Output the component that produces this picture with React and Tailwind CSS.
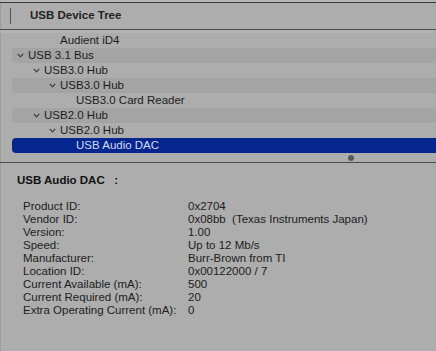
const tree = [
  { label: "Audient iD4", level: 2, leaf: true },
  { label: "USB 3.1 Bus", level: 0 },
  { label: "USB3.0 Hub", level: 1 },
  { label: "USB3.0 Hub", level: 2 },
  { label: "USB3.0 Card Reader", level: 3, leaf: true },
  { label: "USB2.0 Hub", level: 1 },
  { label: "USB2.0 Hub", level: 2 },
  { label: "USB Audio DAC", level: 3, leaf: true, selected: true },
];

const details = [
  ["Product ID:", "0x2704"],
  ["Vendor ID:", "0x08bb  (Texas Instruments Japan)"],
  ["Version:", "1.00"],
  ["Speed:", "Up to 12 Mb/s"],
  ["Manufacturer:", "Burr-Brown from TI"],
  ["Location ID:", "0x00122000 / 7"],
  ["Current Available (mA):", "500"],
  ["Current Required (mA):", "20"],
  ["Extra Operating Current (mA):", "0"],
];

const indents = ["pl-[5px]", "pl-[21px]", "pl-[37px]", "pl-[53px]"];

function Chevron() {
  return (
    <svg width="7" height="5" viewBox="0 0 7 5" className="mr-[4px] shrink-0">
      <path d="M0.8 0.8 L3.5 3.8 L6.2 0.8" fill="none" stroke="#3c3c3c" strokeWidth="1.2" />
    </svg>
  );
}

function Row({ item, index }) {
  const striped = index % 2 === 1;
  let bg = "";
  if (item.selected) bg = "bg-[#06268f] text-[#d4daee]";
  else if (striped) bg = "bg-[#a4a4a4]";
  return (
    <div
      className={`ml-[11px] flex h-[15px] items-center rounded-l-[4px] ${bg} ${
        indents[item.level]
      }`}
    >
      {item.leaf ? <span className="w-[11px] shrink-0" /> : <Chevron />}
      <span className="whitespace-nowrap">{item.label}</span>
    </div>
  );
}

export default function App() {
  return (
    <div className="h-[351px] w-[436px] overflow-hidden bg-[#adadad] text-[11.5px] leading-none text-[#1c1c1c] font-['Liberation_Sans','Noto_Sans',sans-serif]">
      <div className="h-[2px] bg-[#b4b4b4]" />
      <div className="h-[1px] bg-[#3a3a3a]" />
      <div className="flex h-[26px] items-center border-l border-[#9c9c9c]">
        <div className="ml-[9px] h-[16px] w-[1px] bg-[#555]" />
        <span className="ml-[19px] font-semibold text-[#222]">USB Device Tree</span>
      </div>
      <div className="h-[1px] bg-[#4c4c4c]" />
      <div className="h-[3px] bg-[#b2b2b2]" />
      <div className="flex flex-col border-l border-[#9c9c9c]">
        {tree.map((item, i) => (
          <Row key={i} item={item} index={i} />
        ))}
        <div className="flex h-[9px] items-center justify-center pl-[264px]">
          <span className="h-[6px] w-[6px] rounded-full bg-[#5a5a5a]" />
        </div>
      </div>
      <div className="h-[1px] bg-[#4a4a4a]" />
      <div className="h-[188px] border-l border-[#9c9c9c] pl-[16px] pt-[12px]">
        <div className="font-bold text-[#111]">USB Audio DAC&nbsp;&nbsp;&nbsp;:</div>
        <div className="mt-[14px] pl-[6px]">
          {details.map(([k, v]) => (
            <div key={k} className="flex h-[13px] items-center">
              <span className="w-[165px] whitespace-nowrap">{k}</span>
              <span className="whitespace-pre">{v}</span>
            </div>
          ))}
        </div>
      </div>
    </div>
  );
}
